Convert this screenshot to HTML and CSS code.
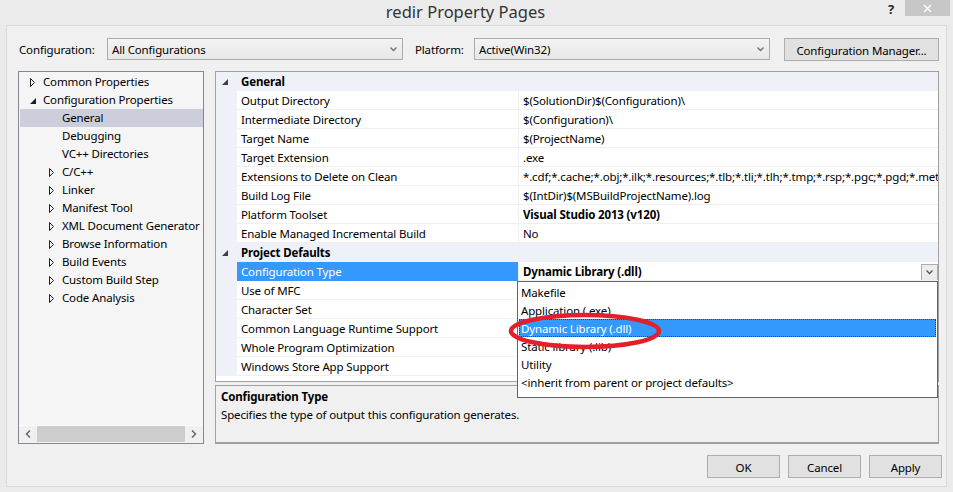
FILE: index.html
```html
<!DOCTYPE html>
<html>
<head>
<meta charset="utf-8">
<title>redir Property Pages</title>
<link rel="stylesheet" href="styles.css">
</head>
<body>
<div class="titlebar">
  <div class="title">redir Property Pages</div>
  <div class="help">?</div>
  <div class="close"><svg width="9" height="9" viewBox="0 0 9 9"><path d="M1 1 L8 8 M8 1 L1 8" stroke="#fff" stroke-width="1.4" fill="none"/></svg></div>
</div>
<div class="client">
  <div class="toolbar">
    <span class="lbl lbl-config">Configuration:</span>
    <div class="combo combo-config"><span>All Configurations</span><svg class="chev" width="7" height="5" viewBox="0 0 7 5"><polyline points="0.5,0.5 3.5,3.5 6.5,0.5" fill="none" stroke="#6d6d6d" stroke-width="1.3"/></svg></div>
    <span class="lbl lbl-platform">Platform:</span>
    <div class="combo combo-platform"><span>Active(Win32)</span><svg class="chev" width="7" height="5" viewBox="0 0 7 5"><polyline points="0.5,0.5 3.5,3.5 6.5,0.5" fill="none" stroke="#6d6d6d" stroke-width="1.3"/></svg></div>
    <div class="btn btn-manager">Configuration Manager...</div>
  </div>
  <div class="main">
    <div class="tree">
      <div class="tree-list">
        <div class="node lvl0"><span class="exp"><svg width="6" height="9" viewBox="0 0 6 9"><polygon points="0.5,0.5 4.5,4.5 0.5,8.5" fill="none" stroke="#1e1e1e" stroke-width="1"/></svg></span>Common Properties</div>
        <div class="node lvl0"><span class="exp"><svg width="6" height="9" viewBox="0 0 6 9"><polygon points="6,2 6,8 0,8" fill="#1e1e1e"/></svg></span>Configuration Properties</div>
        <div class="node lvl1 selected"><span class="exp"></span>General</div>
        <div class="node lvl1"><span class="exp"></span>Debugging</div>
        <div class="node lvl1"><span class="exp"></span>VC++ Directories</div>
        <div class="node lvl1"><span class="exp"><svg width="6" height="9" viewBox="0 0 6 9"><polygon points="0.5,0.5 4.5,4.5 0.5,8.5" fill="none" stroke="#1e1e1e" stroke-width="1"/></svg></span>C/C++</div>
        <div class="node lvl1"><span class="exp"><svg width="6" height="9" viewBox="0 0 6 9"><polygon points="0.5,0.5 4.5,4.5 0.5,8.5" fill="none" stroke="#1e1e1e" stroke-width="1"/></svg></span>Linker</div>
        <div class="node lvl1"><span class="exp"><svg width="6" height="9" viewBox="0 0 6 9"><polygon points="0.5,0.5 4.5,4.5 0.5,8.5" fill="none" stroke="#1e1e1e" stroke-width="1"/></svg></span>Manifest Tool</div>
        <div class="node lvl1"><span class="exp"><svg width="6" height="9" viewBox="0 0 6 9"><polygon points="0.5,0.5 4.5,4.5 0.5,8.5" fill="none" stroke="#1e1e1e" stroke-width="1"/></svg></span>XML Document Generator</div>
        <div class="node lvl1"><span class="exp"><svg width="6" height="9" viewBox="0 0 6 9"><polygon points="0.5,0.5 4.5,4.5 0.5,8.5" fill="none" stroke="#1e1e1e" stroke-width="1"/></svg></span>Browse Information</div>
        <div class="node lvl1"><span class="exp"><svg width="6" height="9" viewBox="0 0 6 9"><polygon points="0.5,0.5 4.5,4.5 0.5,8.5" fill="none" stroke="#1e1e1e" stroke-width="1"/></svg></span>Build Events</div>
        <div class="node lvl1"><span class="exp"><svg width="6" height="9" viewBox="0 0 6 9"><polygon points="0.5,0.5 4.5,4.5 0.5,8.5" fill="none" stroke="#1e1e1e" stroke-width="1"/></svg></span>Custom Build Step</div>
        <div class="node lvl1"><span class="exp"><svg width="6" height="9" viewBox="0 0 6 9"><polygon points="0.5,0.5 4.5,4.5 0.5,8.5" fill="none" stroke="#1e1e1e" stroke-width="1"/></svg></span>Code Analysis</div>
      </div>
      <div class="hscroll">
        <div class="sb-arrow"><svg width="6" height="8" viewBox="0 0 6 8"><polyline points="5,0.5 1.5,4 5,7.5" fill="none" stroke="#606060" stroke-width="1.4"/></svg></div>
        <div class="sb-thumb"></div>
        <div class="sb-arrow"><svg width="6" height="8" viewBox="0 0 6 8"><polyline points="1,0.5 4.5,4 1,7.5" fill="none" stroke="#606060" stroke-width="1.4"/></svg></div>
      </div>
    </div>
    <div class="right">
      <div class="grid">
        <div class="row header"><span class="gut"><svg width="6" height="6" viewBox="0 0 6 6"><polygon points="6,0 6,6 0,6" fill="#404040"/></svg></span><span class="hname">General</span></div>
        <div class="row"><span class="gut"></span><span class="name">Output Directory</span><span class="val">$(SolutionDir)$(Configuration)\</span></div>
        <div class="row"><span class="gut"></span><span class="name">Intermediate Directory</span><span class="val">$(Configuration)\</span></div>
        <div class="row"><span class="gut"></span><span class="name">Target Name</span><span class="val">$(ProjectName)</span></div>
        <div class="row"><span class="gut"></span><span class="name">Target Extension</span><span class="val">.exe</span></div>
        <div class="row"><span class="gut"></span><span class="name">Extensions to Delete on Clean</span><span class="val">*.cdf;*.cache;*.obj;*.ilk;*.resources;*.tlb;*.tli;*.tlh;*.tmp;*.rsp;*.pgc;*.pgd;*.meta;*.tlog;*.manifest;*.res;*.pch;*.exp;*.idb;*.rep;*.xdc;*.pdb;*_manifest.rc;*.bsc;*.sbr;*.xml;*.metagen;*.bi</span></div>
        <div class="row"><span class="gut"></span><span class="name">Build Log File</span><span class="val">$(IntDir)$(MSBuildProjectName).log</span></div>
        <div class="row"><span class="gut"></span><span class="name">Platform Toolset</span><span class="val bold">Visual Studio 2013 (v120)</span></div>
        <div class="row"><span class="gut"></span><span class="name">Enable Managed Incremental Build</span><span class="val">No</span></div>
        <div class="row header"><span class="gut"><svg width="6" height="6" viewBox="0 0 6 6"><polygon points="6,0 6,6 0,6" fill="#404040"/></svg></span><span class="hname">Project Defaults</span></div>
        <div class="row sel"><span class="gut"></span><span class="name">Configuration Type</span><span class="val bold">Dynamic Library (.dll)<span class="dd-btn"><svg width="7" height="5" viewBox="0 0 7 5"><polyline points="0.5,0.5 3.5,3.5 6.5,0.5" fill="none" stroke="#555" stroke-width="1.3"/></svg></span></span></div>
        <div class="row"><span class="gut"></span><span class="name">Use of MFC</span><span class="val"></span></div>
        <div class="row"><span class="gut"></span><span class="name">Character Set</span><span class="val"></span></div>
        <div class="row"><span class="gut"></span><span class="name">Common Language Runtime Support</span><span class="val"></span></div>
        <div class="row"><span class="gut"></span><span class="name">Whole Program Optimization</span><span class="val"></span></div>
        <div class="row"><span class="gut"></span><span class="name">Windows Store App Support</span><span class="val"></span></div>

        <div class="dropdown">
          <div class="item">Makefile</div>
          <div class="item">Application (.exe)</div>
          <div class="item hot">Dynamic Library (.dll)</div>
          <div class="item">Static library (.lib)</div>
          <div class="item">Utility</div>
          <div class="item">&lt;inherit from parent or project defaults&gt;</div>
        </div>
        <svg class="mark" width="156" height="40" viewBox="0 0 156 40"><ellipse cx="77" cy="20" rx="74" ry="16" fill="none" stroke="#e3202a" stroke-width="4.5"/></svg>
      </div>
      <div class="desc">
        <div class="desc-title">Configuration Type</div>
        <div class="desc-text">Specifies the type of output this configuration generates.</div>
      </div>
    </div>
  </div>
  <div class="buttons">
    <div class="btn btn-dlg">OK</div>
    <div class="btn btn-dlg">Cancel</div>
    <div class="btn btn-dlg">Apply</div>
  </div>
</div>
</body>
</html>
```
FILE: styles.css
```css
* { box-sizing: border-box; }
html, body { margin: 0; padding: 0; }
body {
  width: 953px;
  height: 492px;
  overflow: hidden;
  background: #ebebeb;
  font-family: "Segoe UI", "Noto Sans", sans-serif;
  font-size: 11.5px;
  letter-spacing: -0.15px;
  color: #000;
}

/* title bar */
.titlebar {
  height: 25px;
  display: flex;
  align-items: flex-start;
}
.title {
  flex: 1;
  text-align: center;
  font-size: 16.5px;
  letter-spacing: 0;
  line-height: 23px;
  color: #333;
  padding-left: 50px;
}
.help {
  width: 20px;
  height: 18px;
  margin-right: 4px;
  font-weight: bold;
  font-size: 13px;
  line-height: 18px;
  color: #2a2a2a;
  text-align: center;
}
.close {
  width: 45px;
  height: 16px;
  margin-right: 3px;
  background: #c7c7c7;
  display: flex;
  align-items: center;
  justify-content: center;
}

/* client */
.client {
  margin-left: 6px;
  width: 941px;
  height: 462px;
  border: 1px solid #d9d9d9;
  background: #f0f0f0;
  padding: 12px 7px 0 11px;
  display: flex;
  flex-direction: column;
}

.toolbar {
  height: 23px;
  display: flex;
  align-items: flex-start;
}
.lbl { line-height: 24px; }
.lbl-config { width: 89px; padding-left: 1px; }
.lbl-platform { width: 59px; margin-left: 12px; }
.combo {
  height: 22px;
  border: 1px solid #acacac;
  background: linear-gradient(#f3f3f3, #e8e8e8);
  display: flex;
  align-items: center;
  justify-content: space-between;
  padding: 1px 5px 0 4px;
  line-height: 19px;
}
.combo-config { width: 296px; }
.combo-platform { width: 296px; }
.chev { display: block; }

.btn {
  height: 23px;
  border: 1px solid #adadad;
  background: #e1e1e1;
  display: flex;
  align-items: center;
  justify-content: center;
  padding-top: 1px;
}
.btn-manager { width: 155px; margin-left: 14px; }

/* main area */
.main {
  margin-top: 10px;
  height: 373px;
  display: flex;
  gap: 11px;
}
.tree {
  width: 186px;
  border: 1px solid #828790;
  background: #f5f5f5;
  display: flex;
  flex-direction: column;
}
.tree-list {
  flex: 1;
  padding-top: 1px;
  overflow: hidden;
}
.node {
  height: 18px;
  line-height: 18px;
  display: flex;
  align-items: center;
  white-space: nowrap;
}
.node.lvl0 { padding-left: 11px; }
.node.lvl1 { padding-left: 30px; }
.node.selected { background: #cccedb; margin-left: 1px; }
.node .exp {
  width: 13px;
  flex: none;
  display: flex;
  align-items: center;
}
.node.selected .exp { margin-left: -1px; }
.exp svg { display: block; }

.hscroll {
  height: 17px;
  margin-bottom: 1px;
  border-top: 1px solid #fcfcfc;
  background: #f0f0f0;
  display: flex;
}
.sb-arrow {
  width: 18px;
  display: flex;
  align-items: center;
  justify-content: center;
}
.sb-thumb {
  flex: 1;
  background: #cdcdcd;
}

.right {
  width: 724px;
  display: flex;
  flex-direction: column;
  gap: 3px;
}
.grid {
  position: relative;
  height: 311px;
  border: 1px solid #a0a0a0;
  background: #fff;
  z-index: 2;
}
.row {
  height: 19px;
  display: flex;
}
.gut {
  width: 21px;
  flex: none;
  background: #eef2f8;
  display: flex;
  align-items: center;
  padding-left: 6px;
}
.name {
  width: 281px;
  flex: none;
  padding: 1px 0 0 4px;
  line-height: 17px;
  border-bottom: 1px solid #f0f0f0;
  white-space: nowrap;
  overflow: hidden;
}
.val {
  flex: 1;
  min-width: 0;
  padding: 1px 0 0 4px;
  line-height: 17px;
  border-left: 1px solid #f0f0f0;
  border-bottom: 1px solid #f0f0f0;
  white-space: nowrap;
  overflow: hidden;
  position: relative;
}
.bold { font-weight: bold; }
.row.header { background: #eef2f8; }
.hname {
  padding: 1px 0 0 4px;
  font-weight: bold;
  line-height: 18px;
}
.row.sel .name { background: #3399ff; color: #fff; border-bottom-color: #3399ff; }
.dd-btn {
  position: absolute;
  right: 0;
  top: 2px;
  width: 17px;
  height: 17px;
  border: 1px solid #acacac;
  background: #ececec;
  display: flex;
  align-items: center;
  justify-content: center;
}

.dropdown {
  position: absolute;
  left: 301px;
  top: 209px;
  width: 421px;
  height: 117px;
  border: 1px solid #646464;
  background: #fff;
  padding: 1px 1px 0 1px;
  z-index: 5;
}
.item {
  height: 18px;
  line-height: 17px;
  padding: 1px 0 0 2px;
  white-space: nowrap;
}
.item.hot {
  background: #3399ff;
  color: #fff;
  outline: 1px dotted #1a3b66;
  outline-offset: -1px;
}
.mark {
  position: absolute;
  left: 292px;
  top: 239px;
  z-index: 6;
}

.desc {
  height: 59px;
  border: 1px solid #a0a0a0;
  border-bottom-width: 2px;
  background: #f0f0f0;
  padding: 2px 5px 0 5px;
  line-height: 18px;
}
.desc-title { font-weight: bold; }

.buttons {
  margin-top: 11px;
  margin-right: -3px;
  display: flex;
  justify-content: flex-end;
  gap: 8px;
}
.btn-dlg { width: 73px; }
```
